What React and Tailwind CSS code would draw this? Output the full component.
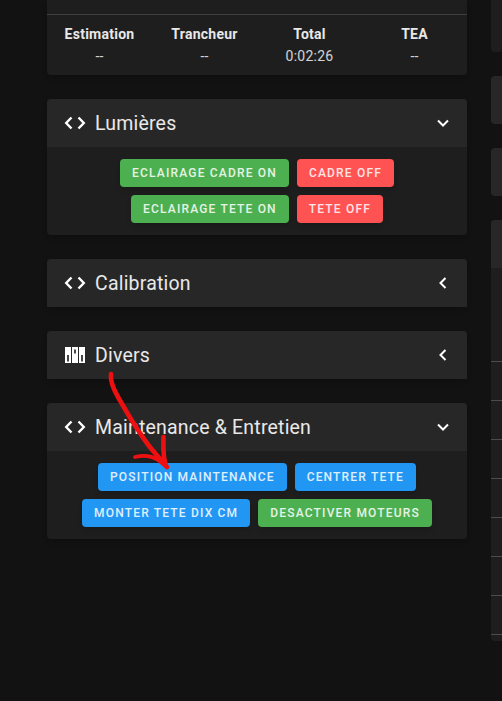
const font = { fontFamily: "Roboto, sans-serif" };

function CodeIcon() {
  return (
    <svg width="22" height="14" viewBox="0 0 22 14" fill="none" stroke="white" strokeWidth="2.4" className="shrink-0 -ml-px">
      <path d="M7.5 1.5 2.2 7l5.3 5.5M14.5 1.5 19.8 7l-5.3 5.5" />
    </svg>
  );
}

function BarsIcon() {
  return (
    <svg width="20" height="16" viewBox="0 0 20 16" className="shrink-0">
      <rect x="0" y="0" width="6" height="16" fill="white" />
      <rect x="7" y="0" width="6" height="16" fill="white" />
      <rect x="14" y="0" width="6" height="16" fill="white" />
      <rect x="2.2" y="8" width="1.6" height="6.5" fill="#1a1a1a" />
      <rect x="9.2" y="2.500" width="1.6" height="4" fill="#1a1a1a" />
      <rect x="16.2" y="8" width="1.6" height="6.5" fill="#1a1a1a" />
    </svg>
  );
}

function Chevron({ open }) {
  return (
    <svg width="12" height="12" viewBox="0 0 12 12" fill="none" stroke="white" strokeWidth="2" className="shrink-0">
      <path d={open ? "M1 3.5 6 8.5 11 3.5" : "M8.5 1 3.5 6 8.5 11"} />
    </svg>
  );
}

const colors = {
  green: "bg-[#4caf50]",
  red: "bg-[#ff5252]",
  blue: "bg-[#2196f3]",
};

function Btn({ color, children }) {
  return (
    <button className={`h-7 px-3 rounded text-xs font-medium uppercase tracking-[1.18px] text-white/85 shadow-md whitespace-nowrap ${colors[color]}`}>
      {children}
    </button>
  );
}

function Panel({ title, icon, open, children }) {
  return (
    <section className="rounded bg-[#1e1e1e] shadow-md">
      <header className="h-12 flex items-center pl-[18px] pr-[18px] rounded-t bg-[#272727]">
        <span className="w-[30px] flex">{icon}</span>
        <span className="mt-[2px] text-[19.5px] text-white/90 tracking-[0.01em]">{title}</span>
        <span className="ml-auto flex"><Chevron open={open} /></span>
      </header>
      {children}
    </section>
  );
}

function Stat({ label, value }) {
  return (
    <div className="flex-1 text-center">
      <div className="text-sm font-bold text-white/90 leading-5 tracking-[0.0178em]">{label}</div>
      <div className="text-sm text-white/80 leading-5 mt-0.5 tracking-[0.0178em]">{value}</div>
    </div>
  );
}

export default function App() {
  return (
    <div style={font} className="relative h-[701px] w-[502px] overflow-hidden bg-[#121212] flex">
      <main className="ml-[47px] w-[420px] shrink-0 flex flex-col gap-6">
        <section className="h-[75px] rounded-b bg-[#1e1e1e] shadow-md flex flex-col">
          <div className="h-[15px] border-b border-white/15" />
          <div className="flex pt-[9px]">
            <Stat label="Estimation" value="--" />
            <Stat label="Trancheur" value="--" />
            <Stat label="Total" value="0:02:26" />
            <Stat label="TEA" value="--" />
          </div>
        </section>

        <Panel title="Lumières" icon={<CodeIcon />} open>
          <div className="h-[88px] flex flex-col items-center pt-3 gap-2">
            <div className="flex gap-2"><Btn color="green">Eclairage cadre on</Btn><Btn color="red">Cadre off</Btn></div>
            <div className="flex gap-2"><Btn color="green">Eclairage tete on</Btn><Btn color="red">Tete off</Btn></div>
          </div>
        </Panel>

        <Panel title="Calibration" icon={<CodeIcon />} />
        <Panel title="Divers" icon={<BarsIcon />} />

        <Panel title="Maintenance & Entretien" icon={<CodeIcon />} open>
          <div className="h-[88px] flex flex-col items-center pt-3 gap-2">
            <div className="flex gap-2"><Btn color="blue">Position maintenance</Btn><Btn color="blue">Centrer tete</Btn></div>
            <div className="flex gap-2"><Btn color="blue">Monter tete dix cm</Btn><Btn color="green">Desactiver moteurs</Btn></div>
          </div>
        </Panel>
      </main>

      <aside className="ml-6 flex-1 flex flex-col gap-6">
        <div className="h-[52px] rounded-b bg-[#1e1e1e]" />
        <div className="h-12 rounded-l bg-[#272727]" />
        <div className="h-12 rounded-l bg-[#272727]" />
        <div className="rounded-l bg-[#1e1e1e]">
          <div className="h-12 rounded-tl bg-[#272727]" />
          <div className="h-[94px] border-b border-white/20" />
          {[0, 1, 2, 3, 4, 5, 6].map((i) => (
            <div key={i} className="h-[39px] border-b border-white/20" />
          ))}
          <div className="h-1.5" />
        </div>
      </aside>

      <svg className="absolute inset-0 pointer-events-none" width="502" height="701" viewBox="0 0 502 701" fill="none" stroke="#ee1010" strokeLinecap="round" strokeLinejoin="round">
        <path d="M111 374C110 382 114 390 118 397 125 409 131 420 138 430 144 439 149 447 155 453L167 467" strokeWidth="4.6" />
        <path d="M163.500 437C163.500 446 162.500 456 166 466" strokeWidth="4.6" />
        <path d="M135 457C143 455 152 456 158 460L167 467" strokeWidth="3.8" />
      </svg>
    </div>
  );
}
